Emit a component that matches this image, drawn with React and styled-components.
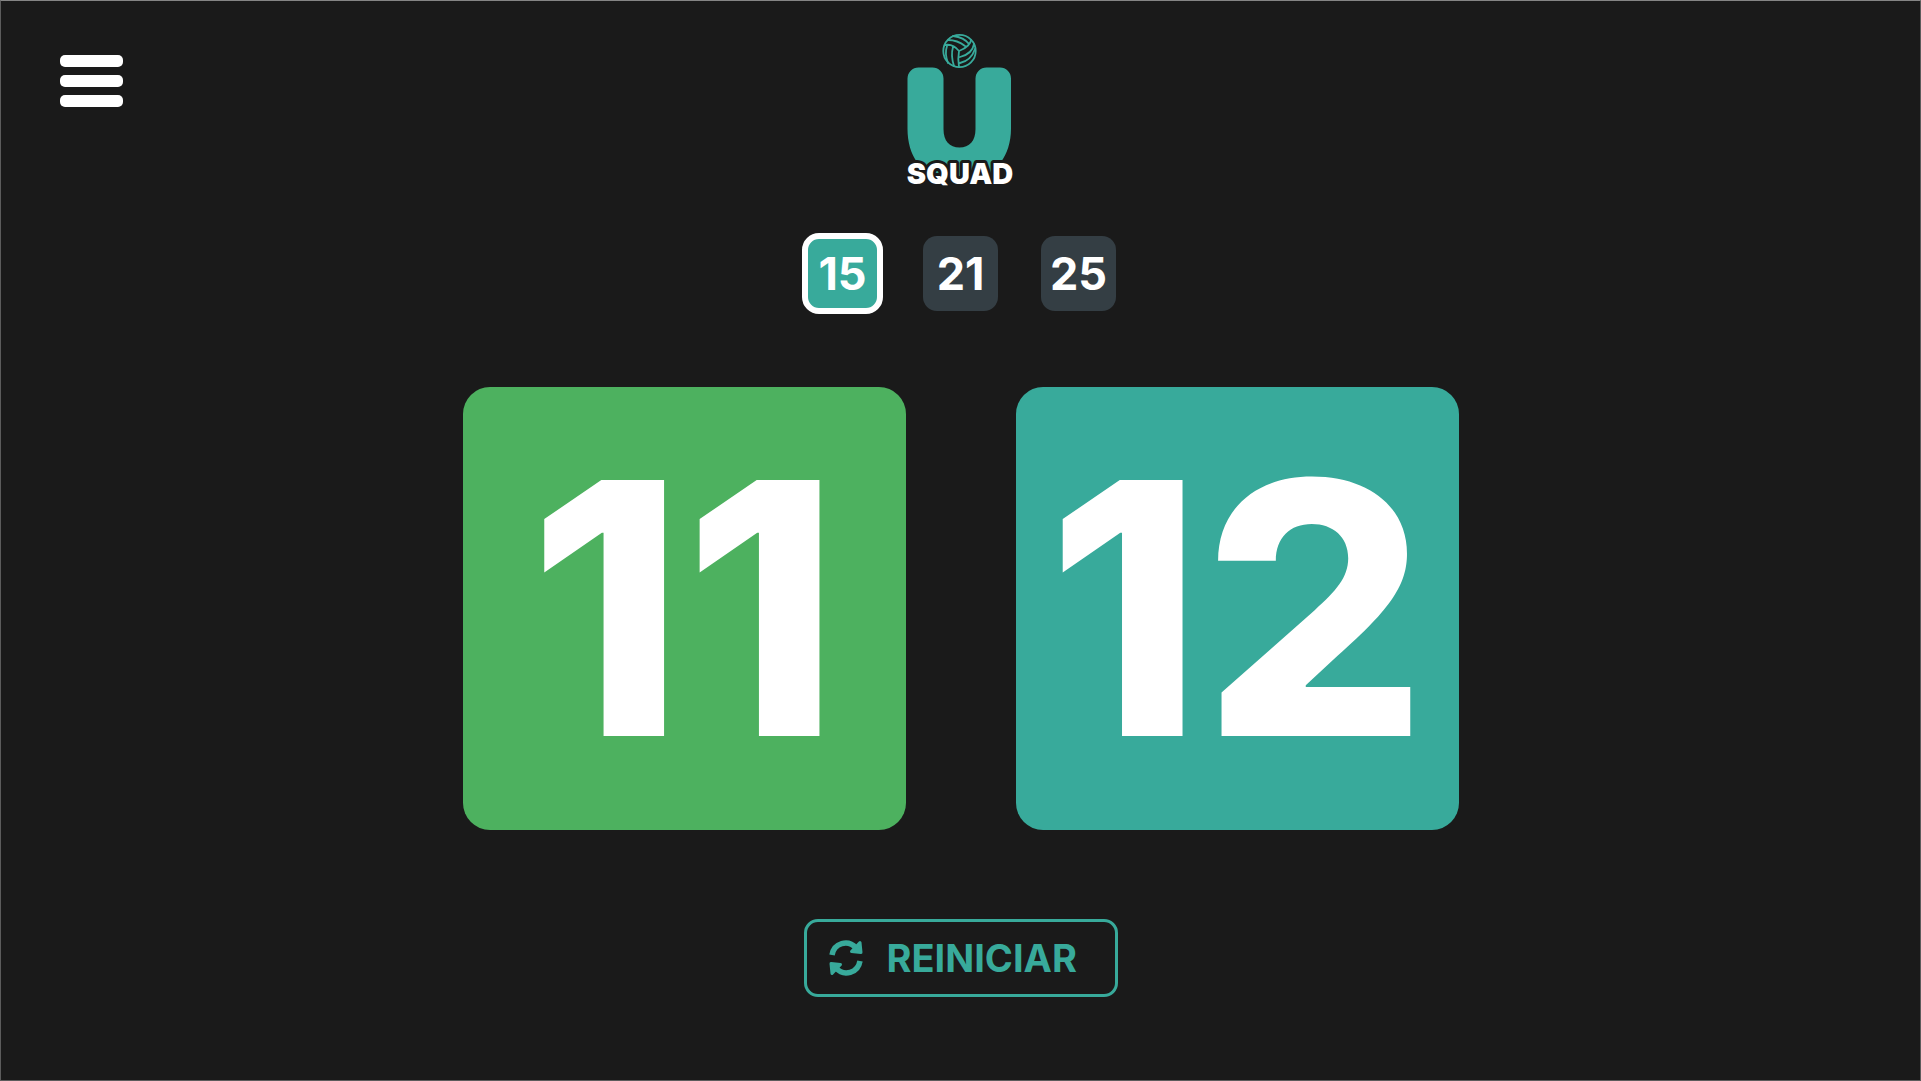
import React, { useState } from "react";
import styled, { createGlobalStyle } from "styled-components";

const GlobalStyle = createGlobalStyle`
  *, *::before, *::after { box-sizing: border-box; }
  body { margin: 0; background: #1a1a1a; }
  button { font: inherit; cursor: pointer; }
`;

const TEAL = "#38aa9b";
const GREEN = "#4db15f";

const Page = styled.div`
  display: flex;
  flex-direction: column;
  align-items: center;
  min-height: 100vh;
  padding-bottom: 48px;
  border: 1px solid #5c5c5c;
  border-top-color: #858585;
  background: #1a1a1a;
  color: #fff;
  font-family: Inter, "Open Sans", sans-serif;
  font-weight: 700;
`;

const Header = styled.header`
  display: grid;
  grid-template-columns: 1fr auto 1fr;
  align-items: start;
  width: 100%;
  padding: 31px 59px 0;
`;

const MenuButton = styled.button`
  display: flex;
  flex-direction: column;
  gap: 8px;
  justify-self: start;
  margin-top: 23px;
  padding: 0;
  border: 0;
  background: none;
`;

const MenuBar = styled.span`
  width: 63px;
  height: 12px;
  border-radius: 5px;
  background: #fff;
`;

const Logo = styled.svg`
  display: block;
  width: 112px;
  height: 160px;
`;

const LogoText = styled.text`
  font-size: 29px;
  font-weight: 900;
  fill: #fff;
  stroke: #1a1a1a;
  stroke-width: 6px;
  stroke-linejoin: round;
  paint-order: stroke;
`;

const Targets = styled.nav`
  display: flex;
  gap: 43px;
  margin-top: 44px;
`;

const TargetButton = styled.button`
  width: 75px;
  height: 75px;
  padding: 0;
  border: 0;
  border-radius: 14px;
  outline: ${(p) => (p.$active ? "6px solid #fff" : "none")};
  outline-offset: -3px;
  background: ${(p) => (p.$active ? TEAL : "#343e44")};
  color: #fff;
  font-size: 45px;
  line-height: 75px;
`;

const Scores = styled.main`
  display: flex;
  gap: 110px;
  margin-top: 76px;
`;

const ScoreCard = styled.button`
  width: 443px;
  height: 443px;
  padding: 0;
  border: 0;
  border-radius: 27px;
  background: ${(p) => p.$color};
  color: #fff;
  font-size: 352px;
  font-weight: 800;
  line-height: 443px;
  text-align: center;
`;

const ResetButton = styled.button`
  display: flex;
  align-items: center;
  gap: 24px;
  width: 314px;
  height: 78px;
  margin-top: 89px;
  padding: 0 22px;
  border: 3px solid ${TEAL};
  border-radius: 14px;
  background: none;
  color: ${TEAL};
  font-size: 38px;
`;

const ResetIcon = styled.svg`
  flex: none;
  width: 34px;
  height: 36px;
`;

function SquadLogo() {
  return (
    <Logo viewBox="1 0 112 160" role="img" aria-label="U Squad">
      <path
        fill={TEAL}
        d="M3.5 46.500a11 11 0 0 1 11-11h14a11 11 0 0 1 11 11V97c0 12 6 18.500 16 18.500s16-6.500 16-18.500V46.500a11 11 0 0 1 11-11h13.500a11 11 0 0 1 11 11V97c0 13-4 25-10 33l-12 14H25l-12-14C7 122 3.500 110 3.500 97z"
      />
      <g fill="none" stroke={TEAL} strokeWidth="1.800" strokeLinecap="round">
        <circle cx="55.500" cy="19" r="16.200" />
        <path d="M41 13c5-1 10 1 14 6M44 8c7 0 12 2 17 6M49 4c8 1 13 4 16 8M55 19c8-3 12-8 12-11M56 25c8-2 13-7 14-13M56 31c9-2 13-8 15-14M55 19c-1 6-1 11 0 16M49 15c-2 7-1 13 1 19M43 14c-2 6-1 12 1 17" />
      </g>
      <LogoText x="56" y="152" textAnchor="middle">SQUAD</LogoText>
    </Logo>
  );
}

function RefreshGlyph() {
  return (
    <ResetIcon viewBox="0 0 34 36" aria-hidden="true">
      <g fill="none" stroke={TEAL} strokeWidth="5.500">
        <path d="M3 15C5 3 19 -1 27 8" />
        <path d="M31 21C29 33 15 37 7 28" />
      </g>
      <g fill={TEAL} stroke={TEAL} strokeWidth="3" strokeLinejoin="round">
        <path d="M31 2.500l1 10-9.500-1z" />
        <path d="M3 33.500l-1-10 9.500 1z" />
      </g>
    </ResetIcon>
  );
}

export default function App() {
  const [target, setTarget] = useState(15);
  const [scores, setScores] = useState([11, 12]);
  const add = (i) => setScores(scores.map((s, n) => (n === i ? s + 1 : s)));

  return (
    <Page>
      <GlobalStyle />
      <Header>
        <MenuButton type="button" aria-label="Menú">
          <MenuBar />
          <MenuBar />
          <MenuBar />
        </MenuButton>
        <SquadLogo />
      </Header>
      <Targets>
        {[15, 21, 25].map((n) => (
          <TargetButton key={n} type="button" $active={n === target} aria-pressed={n === target} onClick={() => setTarget(n)}>
            {n}
          </TargetButton>
        ))}
      </Targets>
      <Scores>
        <ScoreCard type="button" $color={GREEN} onClick={() => add(0)}>{scores[0]}</ScoreCard>
        <ScoreCard type="button" $color={TEAL} onClick={() => add(1)}>{scores[1]}</ScoreCard>
      </Scores>
      <ResetButton type="button" onClick={() => setScores([0, 0])}>
        <RefreshGlyph />
        REINICIAR
      </ResetButton>
    </Page>
  );
}
